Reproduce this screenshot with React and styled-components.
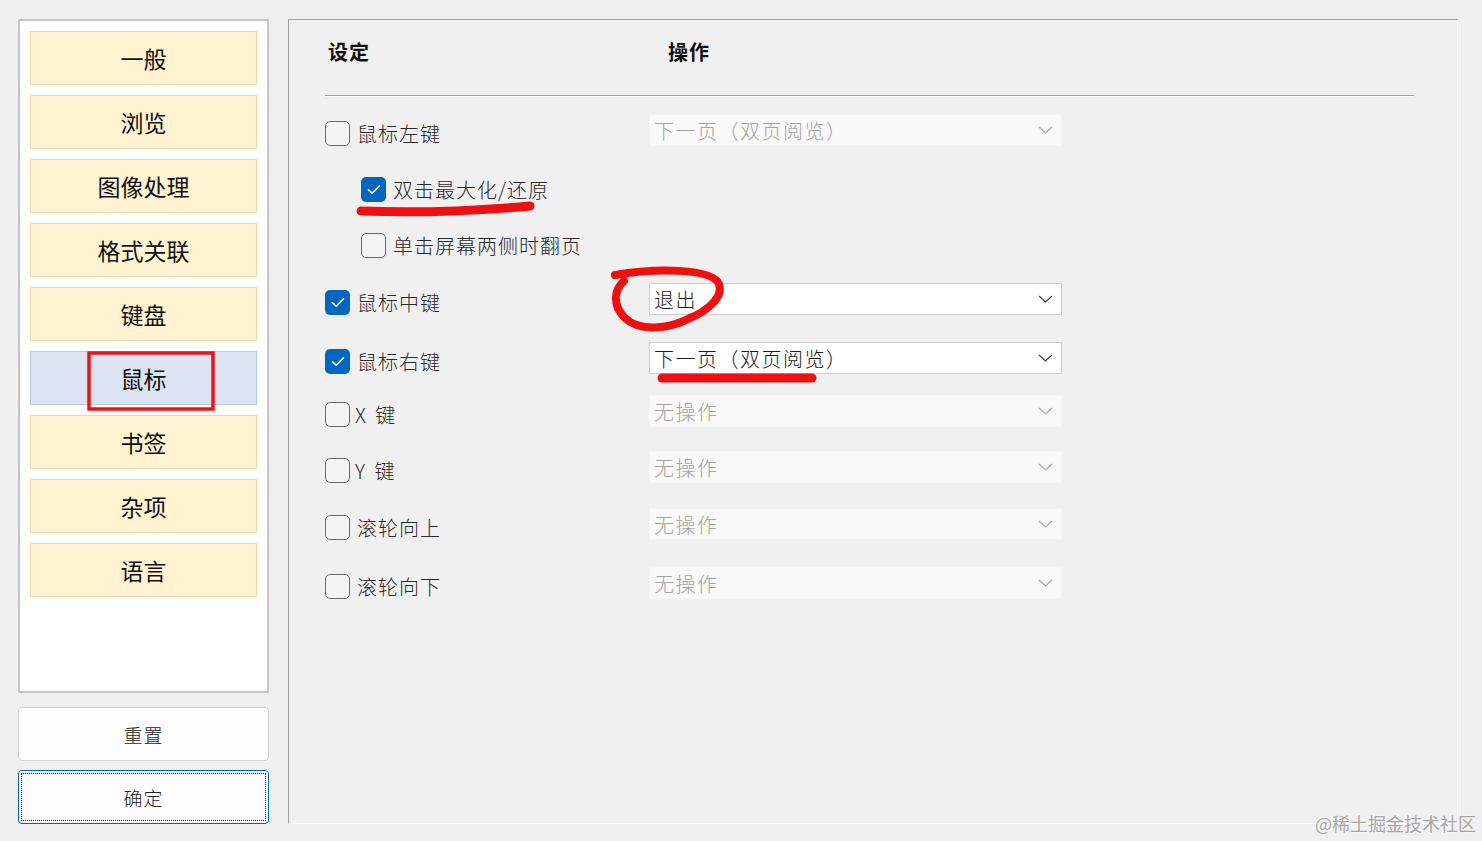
import React from "react";
import styled, { createGlobalStyle } from "styled-components";

const GlobalStyle = createGlobalStyle`
  html, body {
    margin: 0;
    padding: 0;
    background: #f0f0f0;
  }
  body {
    font-family: "Noto Sans CJK SC", "Noto Sans", sans-serif;
  }
`;

const navItems = ["一般", "浏览", "图像处理", "格式关联", "键盘", "鼠标", "书签", "杂项", "语言"];

// shift: extra space above the row, to follow the uneven spacing of the dialog
const rows = [
  { label: "鼠标左键", checked: false, value: "下一页（双页阅览）", enabled: false, shift: 0 },
  { label: "双击最大化/还原", checked: true, indent: true, shift: 0 },
  { label: "单击屏幕两侧时翻页", checked: false, indent: true, shift: 0 },
  { label: "鼠标中键", checked: true, value: "退出", enabled: true, shift: 1 },
  { label: "鼠标右键", checked: true, value: "下一页（双页阅览）", enabled: true, shift: 3 },
  { label: "X 键", checked: false, value: "无操作", enabled: false, latin: true, shift: -3 },
  { label: "Y 键", checked: false, value: "无操作", enabled: false, latin: true, shift: 0 },
  { label: "滚轮向上", checked: false, value: "无操作", enabled: false, shift: 1 },
  { label: "滚轮向下", checked: false, value: "无操作", enabled: false, shift: 3 },
];

const App = () => {
  return (
    <>
      <GlobalStyle />
      <Page>
        <LeftColumn>
          <NavBox>
            {navItems.map((item) => (
              <NavButton key={item} $active={item === "鼠标"}>
                {item}
              </NavButton>
            ))}
          </NavBox>
          <ActionButton>重置</ActionButton>
          <ActionButton $primary>确定</ActionButton>
        </LeftColumn>

        <SettingsPanel>
          <HeaderRow>
            <HeaderCell>设定</HeaderCell>
            <HeaderCell>操作</HeaderCell>
          </HeaderRow>
          <Separator />
          <RowList>
            {rows.map((row) => (
              <Row key={row.label} $shift={row.shift}>
                <CheckLabel $indent={row.indent}>
                  <CheckBox $checked={row.checked}>
                    {row.checked && (
                      <svg width="14" height="11" viewBox="0 0 14 11">
                        <path
                          d="M1.5 5.8 L5.2 9.2 L12.5 1.8"
                          fill="none"
                          stroke="#fff"
                          strokeWidth="1.6"
                          strokeLinecap="round"
                          strokeLinejoin="round"
                        />
                      </svg>
                    )}
                  </CheckBox>
                  <LabelText $latin={row.latin}>{row.label}</LabelText>
                </CheckLabel>
                {row.value && (
                  <Select $enabled={row.enabled}>
                    <span>{row.value}</span>
                    <svg width="15" height="8" viewBox="0 0 15 8">
                      <path
                        d="M1 1 L7.5 7 L14 1"
                        fill="none"
                        stroke={row.enabled ? "#444" : "#aaa"}
                        strokeWidth="1.2"
                      />
                    </svg>
                  </Select>
                )}
              </Row>
            ))}
          </RowList>
        </SettingsPanel>

        <Annotations width="1482" height="841" viewBox="0 0 1482 841">
          <rect x="89" y="353" width="124" height="56" fill="none" stroke="#e8141a" strokeWidth="3.5" />
          <path
            d="M361 211 Q 440 214 530 206"
            fill="none"
            stroke="#ee1010"
            strokeWidth="9"
            strokeLinecap="round"
          />
          <path
            d="M615 275 C 655 268, 712 268, 719 284 C 724 298, 705 312, 690 318 C 668 330, 638 331, 625 318 C 612 305, 614 290, 624 281"
            fill="none"
            stroke="#ee1010"
            strokeWidth="8"
            strokeLinecap="round"
          />
          <path
            d="M662 378 L 812 378"
            fill="none"
            stroke="#ee1010"
            strokeWidth="9"
            strokeLinecap="round"
          />
        </Annotations>

        <Watermark>@稀土掘金技术社区</Watermark>
      </Page>
    </>
  );
};

const Page = styled.div`
  position: relative;
  display: flex;
  gap: 19px;
  height: 841px;
  box-sizing: border-box;
  padding: 19px 24px 17px 18px;
`;

const LeftColumn = styled.div`
  width: 251px;
  flex-shrink: 0;
  display: flex;
  flex-direction: column;
`;

const NavBox = styled.div`
  flex: 1;
  margin-bottom: 14px;
  background: #fff;
  border: 2px solid #c6c6c6;
  padding: 10px;
  display: flex;
  flex-direction: column;
  gap: 10px;
`;

const NavButton = styled.div`
  height: 54px;
  box-sizing: border-box;
  display: flex;
  align-items: center;
  justify-content: center;
  font-size: 23px;
  color: #111;
  background: ${({ $active }) => ($active ? "#dce4f4" : "#fff3d2")};
  border: 1px solid ${({ $active }) => ($active ? "#b9c7e4" : "#f1d7a6")};
`;

const ActionButton = styled.div`
  position: relative;
  height: 54px;
  box-sizing: border-box;
  margin-top: ${({ $primary }) => ($primary ? "9px" : "0")};
  display: flex;
  align-items: center;
  justify-content: center;
  font-size: 19px;
  font-weight: 300;
  letter-spacing: 1px;
  color: #222;
  background: #fdfdfd;
  border: 1px solid ${({ $primary }) => ($primary ? "#0067c0" : "#d2d2d2")};
  border-radius: 4px;

  &::after {
    content: "";
    display: ${({ $primary }) => ($primary ? "block" : "none")};
    position: absolute;
    inset: 2px;
    border: 1px dotted #222;
  }
`;

const SettingsPanel = styled.div`
  flex: 1;
  box-sizing: border-box;
  border-top: 1px solid #a0a0a0;
  border-left: 1px solid #a0a0a0;
  border-right: 1px solid #fff;
  border-bottom: 1px solid #fff;
  padding: 0 43px 0 36px;
`;

const HeaderRow = styled.div`
  display: grid;
  grid-template-columns: 340px 1fr;
  padding: 20px 0 0 3px;
`;

const HeaderCell = styled.div`
  font-size: 20px;
  line-height: 24px;
  font-weight: 700;
  letter-spacing: 1px;
  color: #111;
`;

const Separator = styled.div`
  margin-top: 31px;
  height: 1px;
  background: #a0a0a0;
  border-bottom: 1px solid #fff;
`;

const RowList = styled.div`
  margin-top: 8px;
  display: flex;
  flex-direction: column;
`;

const Row = styled.div`
  height: 56px;
  margin-top: ${({ $shift }) => $shift}px;
  display: grid;
  grid-template-columns: 324px 413px;
  align-items: center;
`;

const CheckLabel = styled.div`
  display: flex;
  align-items: center;
  gap: 7px;
  padding-left: ${({ $indent }) => ($indent ? "36px" : "0")};
`;

const CheckBox = styled.div`
  width: 25px;
  height: 25px;
  box-sizing: border-box;
  border-radius: 5px;
  display: flex;
  align-items: center;
  justify-content: center;
  background: ${({ $checked }) => ($checked ? "#0067c0" : "#f4f4f4")};
  border: ${({ $checked }) => ($checked ? "none" : "1.5px solid #6a6a6a")};
`;

const LabelText = styled.span`
  font-size: 20px;
  font-weight: 300;
  letter-spacing: 1px;
  color: #2a2a2a;
  margin-left: ${({ $latin }) => ($latin ? "-2px" : "0")};
  word-spacing: 3px;
`;

const Select = styled.div`
  height: 32px;
  margin-bottom: 6px;
  box-sizing: border-box;
  display: flex;
  align-items: center;
  justify-content: space-between;
  padding: 0 8px 0 4px;
  font-size: 20px;
  font-weight: 300;
  letter-spacing: 1.5px;
  background: ${({ $enabled }) => ($enabled ? "#fff" : "#f9f9f9")};
  color: ${({ $enabled }) => ($enabled ? "#1a1a1a" : "#a4a4a4")};
  border: 1px solid ${({ $enabled }) => ($enabled ? "#cfcfcf" : "#f4f4f4")};
`;

const Annotations = styled.svg`
  position: absolute;
  top: 0;
  left: 0;
  pointer-events: none;
`;

const Watermark = styled.div`
  position: absolute;
  right: 6px;
  bottom: 5px;
  font-size: 18px;
  color: #a6a6a6;
  text-shadow: 0 0 2px #fff;
`;

export default App;
